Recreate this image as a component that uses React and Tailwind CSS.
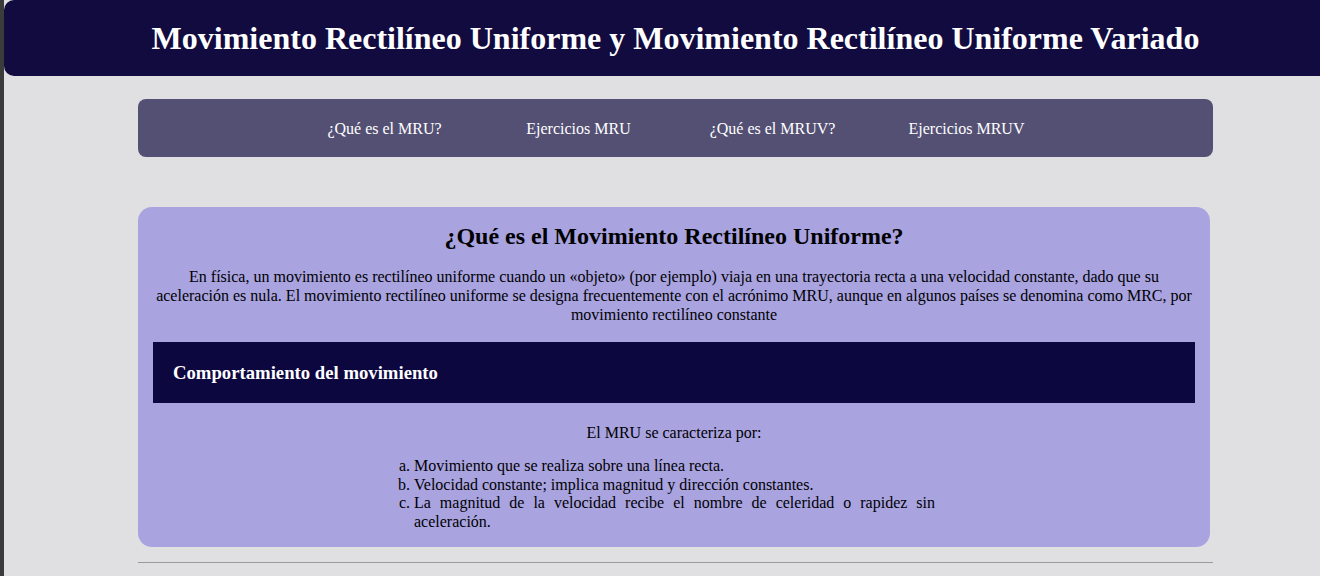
import React from "react";

const links = ["¿Qué es el MRU?", "Ejercicios MRU", "¿Qué es el MRUV?", "Ejercicios MRUV"];

const items = [
  "Movimiento que se realiza sobre una línea recta.",
  "Velocidad constante; implica magnitud y dirección constantes.",
  "La magnitud de la velocidad recibe el nombre de celeridad o rapidez sin aceleración.",
];

function App() {
  return (
    <div
      className="flex min-h-[576px] w-full overflow-hidden bg-[#e0e0e2] text-black"
      style={{ fontFamily: '"Liberation Serif", "Times New Roman", serif' }}
    >
      {/* dark edge */}
      <div className="w-[4px] shrink-0 bg-[#3b3b3b]"></div>

      <div className="flex-1 min-w-0">

        {/* Header */}
        <header className="w-[1343px] h-[76px] rounded-[10px] bg-[#120b40] flex items-center justify-center">
          <h1 className="text-[32px] leading-[38px] font-bold text-white">
            Movimiento Rectilíneo Uniforme y Movimiento Rectilíneo Uniforme Variado
          </h1>
        </header>

        {/* Nav */}
        <nav className="ml-[134px] mt-[23px] w-[1075px] h-[58px] rounded-[8px] bg-[#545074] flex items-center justify-center">
          {links.map((link) => (
            <a key={link} className="w-[194px] text-center text-[16px] leading-[19px] text-white">
              {link}
            </a>
          ))}
        </nav>

        {/* Card */}
        <section className="ml-[134px] mt-[50px] w-[1072px] rounded-[14px] bg-[#a9a3e0] px-[15px] pt-[15px] pb-[16px]">
          <h2 className="text-center text-[24px] leading-[28px] font-bold">
            ¿Qué es el Movimiento Rectilíneo Uniforme?
          </h2>

          <p className="mt-[17px] text-center text-[16px] leading-[19px]">
            En física, un movimiento es rectilíneo uniforme cuando un «objeto» (por ejemplo) viaja en una trayectoria recta a una velocidad constante, dado que su aceleración es nula. El movimiento rectilíneo uniforme se designa frecuentemente con el acrónimo MRU, aunque en algunos países se denomina como MRC, por movimiento rectilíneo constante
          </p>

          <div className="mt-[18px] h-[61px] bg-[#0d0740] flex items-center pl-[20px]">
            <h3 className="text-[18.72px] leading-[22px] font-bold text-white">
              Comportamiento del movimiento
            </h3>
          </div>

          <p className="mt-[20px] text-center text-[16px] leading-[19px]">
            El MRU se caracteriza por:
          </p>

          <ol className="mt-[15px] ml-[245px] w-[537px] pl-[16px] list-[lower-alpha] text-justify text-[16px] leading-[18.6px]">
            {items.map((item) => (
              <li key={item}>{item}</li>
            ))}
          </ol>
        </section>

        <div className="ml-[134px] mt-[15px] w-[1075px] h-px bg-[#9a9a9a]"></div>
      </div>
    </div>
  );
}

export default App;
